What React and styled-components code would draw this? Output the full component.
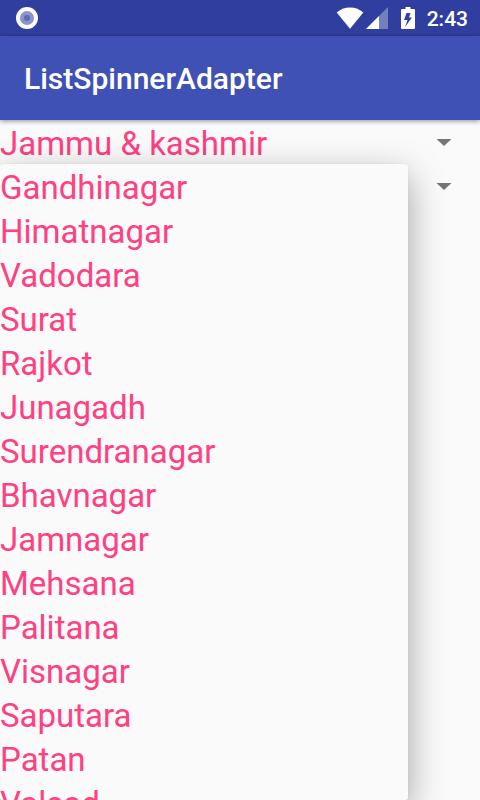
import React, { useState } from "react";
import styled, { createGlobalStyle } from "styled-components";

const GlobalStyle = createGlobalStyle`
  *, *::before, *::after { box-sizing: border-box; }
  body {
    margin: 0;
    background: #fafafa;
    font-family: Roboto, "Liberation Sans", sans-serif;
  }
`;

const Screen = styled.div`
  display: flex;
  flex-direction: column;
  height: 100vh;
  overflow: hidden;
`;

const StatusBar = styled.div`
  display: flex;
  align-items: center;
  justify-content: space-between;
  flex: none;
  height: 36px;
  padding: 0 12px 0 16px;
  background: #303f9f;
  color: #fff;
`;

const StatusIcons = styled.div`
  display: flex;
  align-items: center;
`;

const Icon = styled.svg`
  display: block;
  flex: none;
  margin-right: ${(p) => p.$gap || 0}px;
`;

const Clock = styled.time`
  padding-top: 2px;
  font-size: 21px;
  font-weight: 500;
  line-height: 34px;
`;

const AppBar = styled.header`
  position: relative;
  z-index: 1;
  display: flex;
  align-items: center;
  flex: none;
  height: 84px;
  padding: 2px 24px 0;
  background: #3f51b5;
  box-shadow: 0 1px 5px rgba(0, 0, 0, 0.45);
`;

const Title = styled.h1`
  margin: 0;
  color: #fff;
  font-size: 30px;
  font-weight: 500;
  line-height: 36px;
`;

const Content = styled.main`
  position: relative;
  flex: 1;
  min-height: 0;
`;

const Spinner = styled.div`
  display: grid;
  grid-template-columns: 1fr 72px;
  align-items: center;
  height: 44px;
`;

const SpinnerSelect = styled.select`
  grid-row: 1;
  grid-column: 1 / 3;
  width: 100%;
  height: 44px;
  padding: 4px 72px 0 0;
  border: 0;
  outline: 0;
  appearance: none;
  background: transparent;
  color: #ff4081;
  font: 400 33px/40px Roboto, "Liberation Sans", sans-serif;
`;

const Arrow = styled.svg`
  grid-row: 1;
  grid-column: 2;
  justify-self: center;
  display: block;
  pointer-events: none;
`;

const Popup = styled.div`
  position: absolute;
  top: 44px;
  right: 72px;
  bottom: 0;
  left: 0;
  border-radius: 3px;
  background: #fafafa;
  box-shadow: 0 12px 36px rgba(0, 0, 0, 0.36), 0 0 2px rgba(0, 0, 0, 0.08);
`;

const Options = styled.ul`
  height: 100%;
  margin: 0;
  padding: 0;
  overflow-y: auto;
  scrollbar-width: none;
  list-style: none;
`;

const OptionButton = styled.button`
  display: block;
  width: 100%;
  height: 44px;
  padding: 4px 0 0;
  border: 0;
  background: transparent;
  color: #ff4081;
  font: 400 33px/40px Roboto, "Liberation Sans", sans-serif;
  text-align: left;
  white-space: nowrap;
`;

const states = ["Jammu & kashmir", "Gujarat"];
const cities = [
  "Gandhinagar", "Himatnagar", "Vadodara", "Surat", "Rajkot", "Junagadh",
  "Surendranagar", "Bhavnagar", "Jamnagar", "Mehsana", "Palitana",
  "Visnagar", "Saputara", "Patan", "Valsad",
];

function SpinnerField({ label, items, value, onChange }) {
  return (
    <Spinner>
      <SpinnerSelect aria-label={label} value={value} onChange={(e) => onChange(e.target.value)}>
        {items.map((item) => <option key={item}>{item}</option>)}
      </SpinnerSelect>
      <Arrow width="16" height="8" viewBox="0 0 16 8" aria-hidden="true">
        <path d="M.5 1h15L8 8z" fill="#757575" />
      </Arrow>
    </Spinner>
  );
}

export default function App() {
  const [state, setState] = useState(states[0]);
  const [city, setCity] = useState(cities[0]);

  return (
    <>
      <GlobalStyle />
      <Screen>
        <StatusBar>
          <Icon width="22" height="22" viewBox="0 0 22 22" aria-hidden="true">
            <circle cx="11" cy="11" r="11" fill="#fff" />
            <circle cx="11" cy="11" r="7" fill="#8b94cb" />
            <circle cx="11" cy="11" r="3" fill="#5f6bb5" />
          </Icon>
          <StatusIcons>
            <Icon $gap={2} width="28" height="22" viewBox="0 0 28 22" aria-hidden="true">
              <path d="M14 21.8.7 5.4C4.2 2.3 8.7.4 14 .4s9.8 1.9 13.3 5z" fill="#fff" />
            </Icon>
            <Icon $gap={13} width="22" height="22" viewBox="0 0 22 22" aria-hidden="true">
              <path d="M22 0v22H0z" fill="#747fbd" />
              <path d="M13 9v13H0z" fill="#fff" />
            </Icon>
            <Icon $gap={12} width="14" height="22" viewBox="0 0 14 22" aria-hidden="true">
              <path
                fillRule="evenodd"
                fill="#fff"
                d="M4.5 0h5v2H13a1 1 0 0 1 1 1v18a1 1 0 0 1-1 1H1a1 1 0 0 1-1-1V3a1 1 0 0 1 1-1h3.5zM9.5 6H5.5L3 13h3.5L4 20 11 10.5H8z"
              />
            </Icon>
            <Clock>2:43</Clock>
          </StatusIcons>
        </StatusBar>
        <AppBar>
          <Title>ListSpinnerAdapter</Title>
        </AppBar>
        <Content>
          <SpinnerField label="State" items={states} value={state} onChange={setState} />
          <SpinnerField label="City" items={cities} value={city} onChange={setCity} />
          <Popup>
            <Options aria-label="City options">
              {cities.map((item) => (
                <li key={item}>
                  <OptionButton type="button" onClick={() => setCity(item)}>{item}</OptionButton>
                </li>
              ))}
            </Options>
          </Popup>
        </Content>
      </Screen>
    </>
  );
}
